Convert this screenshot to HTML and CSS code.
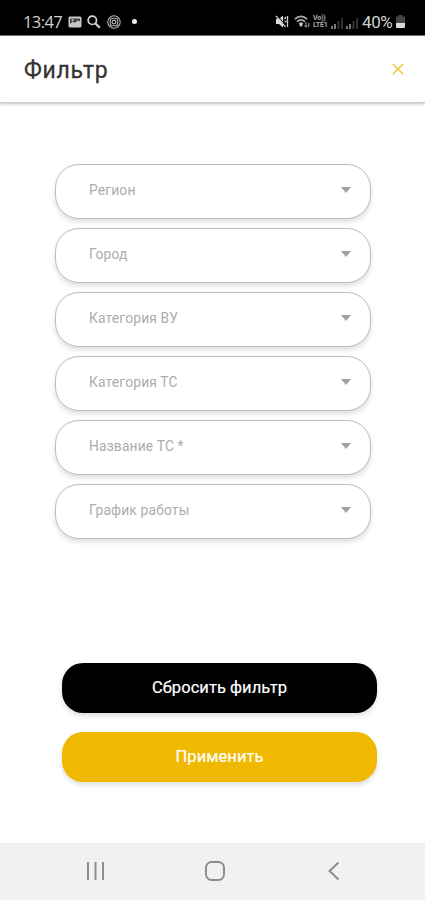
FILE: index.html
```html
<!DOCTYPE html>
<html lang="ru">
<head>
<meta charset="utf-8">
<title>Фильтр</title>
<link rel="stylesheet" href="styles.css">
</head>
<body>
<div class="status">
  <div class="status-left">
    <span class="clock">13:47</span>
    <svg width="14" height="12" viewBox="0 0 14 12"><rect x=".5" y=".5" width="13" height="11" rx="1.500" fill="#c8c8c8"/><path d="M2 2.500h10v3L9.500 4.500 7 7 5 5.500 2 8z" fill="#444"/><circle cx="4.500" cy="4" r="1" fill="#ccc"/></svg>
    <svg class="search" width="14" height="14" viewBox="0 0 14 14" fill="none" stroke="#d5d5d5"><circle cx="5.300" cy="5.300" r="4.200" stroke-width="1.700"/><path d="M8.500 8.500l4.300 4.300" stroke-width="2.200"/></svg>
    <svg class="insta" width="14" height="14" viewBox="0 0 14 14" fill="none" stroke="#b5b5b5" stroke-width="1.100"><circle cx="7" cy="7" r="6.200"/><rect x="3.300" y="3.300" width="7.400" height="7.400" rx="2"/><circle cx="7" cy="7" r="1.900"/></svg>
    <i class="dot"></i>
  </div>
  <div class="status-right">
    <svg width="14" height="13" viewBox="0 0 14 13"><path d="M1 4h3l4-3.500v12L4 9H1z" fill="#ddd"/><path d="M2.500.5l9 11" stroke="#000" stroke-width="1"/><path d="M1 1l9.500 11M9.500 4l1.500-2M9.500 6.500h2M12.500 1v11" stroke="#ccc" stroke-width="1.300" fill="none"/></svg>
    <svg class="wifi" width="16" height="13" viewBox="0 0 16 13" fill="none" stroke="#aaa" stroke-width="1.700"><path d="M.8 4.200Q7-1.500 13.200 4.200M3 6.700q4-3.600 8 0M5.200 9q1.800-1.500 3.600 0"/><path d="M7 8l1.800 2L7 12 5.200 10z" fill="#ccc" stroke="none"/><path d="M12 7v5M10.500 10.500L12 12.200l1.500-1.700M14.800 12V8" stroke-width="1"/></svg>
    <span class="volte"><span>Vo))</span><span>LTE1</span></span>
    <svg class="signal" width="12" height="12" viewBox="0 0 12 12"><path d="M0 9h2v3H0zM3 7h2v5H3z" fill="#777"/><path d="M6.500 4h2v8h-2zM10 1h2v11h-2z" fill="#333"/></svg>
    <svg class="signal" width="12" height="12" viewBox="0 0 12 12"><path d="M0 9h2v3H0zM3 7h2v5H3z" fill="#777"/><path d="M6.500 4h2v8h-2zM10 1h2v11h-2z" fill="#333"/></svg>
    <span class="percent">40%</span>
    <svg class="battery" width="9" height="13" viewBox="0 0 9 13"><path d="M2.500 0h4v1.500H9V8H0V1.500h2.500z" fill="#444"/><path d="M0 8h9v4q0 1-1 1H1q-1 0-1-1z" fill="#d8d8d8"/></svg>
  </div>
</div>
<header class="header">
  <h1>Фильтр</h1>
  <svg width="12" height="12" viewBox="0 0 12 12"><path d="M.8.8l10.400 10.400M11.200.8L.8 11.200" stroke="#efcb3c" stroke-width="1.600"/></svg>
</header>
<main class="main">
  <div class="fields">
    <div class="field"><span>Регион</span><i class="caret"></i></div>
    <div class="field"><span>Город</span><i class="caret"></i></div>
    <div class="field"><span>Категория ВУ</span><i class="caret"></i></div>
    <div class="field"><span>Категория ТС</span><i class="caret"></i></div>
    <div class="field"><span>Название ТС *</span><i class="caret"></i></div>
    <div class="field"><span>График работы</span><i class="caret"></i></div>
  </div>
  <div class="actions">
    <button class="btn btn-reset">Сбросить фильтр</button>
    <button class="btn btn-apply">Применить</button>
  </div>
</main>
<nav class="nav">
  <svg width="20" height="20" viewBox="0 0 20 20" stroke="#8c8c8c" stroke-width="2"><path d="M2 1v18M9.500 1v18M17 1v18"/></svg>
  <svg width="20" height="20" viewBox="0 0 20 20" fill="none" stroke="#8c8c8c" stroke-width="1.900"><rect x="1" y="1" width="18" height="18" rx="5.500"/></svg>
  <svg width="20" height="20" viewBox="0 0 20 20" fill="none" stroke="#8c8c8c" stroke-width="2"><path d="M14.500 1.500L5.500 10l9 8.500"/></svg>
</nav>
</body>
</html>
```

FILE: styles.css
```css
* { box-sizing: border-box; }
body {
  margin: 0;
  width: 425px;
  height: 900px;
  display: flex;
  flex-direction: column;
  overflow: hidden;
  background: #fff;
  font-family: Roboto, "Liberation Sans", sans-serif;
}
svg { display: block; flex: none; }

.status {
  height: 36px;
  flex: none;
  display: flex;
  justify-content: space-between;
  padding: 8px 20px 0 23px;
  background: #000;
  border-bottom: 1px solid #777;
  color: #cfcfcf;
}
.status-left, .status-right { display: flex; align-items: center; height: 27px; }
.clock { width: 45px; font-size: 16.500px; letter-spacing: -.6px; font-family: "Open Sans", sans-serif; }
.search { margin-left: 5px; }
.insta { margin-left: 6px; }
.dot { width: 5px; height: 5px; margin-left: 11px; border-radius: 50%; background: #eee; }
.wifi { margin-left: 5px; }
.volte {
  width: 15px;
  margin-left: 3px;
  font-size: 7px;
  font-weight: 700;
  line-height: 6.500px;
  letter-spacing: -.2px;
  color: #aaa;
}
.volte span { display: block; }
.signal { margin: 2px 0 0 3px; }
.percent { width: 31px; margin: 0 3px 0 4px; font-size: 17px; letter-spacing: -.4px; white-space: nowrap; }

.header {
  height: 67px;
  flex: none;
  display: flex;
  align-items: center;
  justify-content: space-between;
  padding: 0 21px 0 24px;
  border-bottom: 1px solid #ccc;
  box-shadow: 0 1px 3px rgba(0, 0, 0, .25);
}
h1 {
  margin: 3px 0 0;
  font-size: 23px;
  font-weight: 400;
  line-height: 28px;
  letter-spacing: .75px;
  color: #333;
  -webkit-text-stroke: .3px #333;
}

.main { flex: 1; padding: 60.500px 0 0; }
.fields { display: flex; flex-direction: column; gap: 9px; width: 316px; margin-left: 55px; }
.field {
  height: 55px;
  display: flex;
  align-items: center;
  justify-content: space-between;
  padding: 0 19px 2px 33px;
  border: 1px solid #bdbdbd;
  border-radius: 24px;
  background: #fff;
  box-shadow: 0 3px 5px rgba(0, 0, 0, .13);
  font-size: 13.800px;
  letter-spacing: .17px;
  color: #acacac;
}
.caret { border: 5.500px solid transparent; border-top: 6px solid #a0a0a0; border-bottom: 0; margin-top: -1px; }

.actions { display: flex; flex-direction: column; gap: 19px; width: 315px; margin: 124px 0 0 62px; }
.btn {
  height: 50px;
  padding: 0 0 1px;
  border: 0;
  border-radius: 21px;
  box-shadow: 0 3px 5px rgba(0, 0, 0, .13);
  font: 400 16.500px Roboto, sans-serif;
  letter-spacing: .05px;
  color: #fff;
  -webkit-text-stroke: .2px #fff;
}
.btn-reset { background: #000; }
.btn-apply { background: #f0b800; }

.nav {
  height: 57px;
  flex: none;
  display: flex;
  justify-content: space-between;
  padding: 18px 81px 0 86px;
  background: #f1f1f1;
}
```
